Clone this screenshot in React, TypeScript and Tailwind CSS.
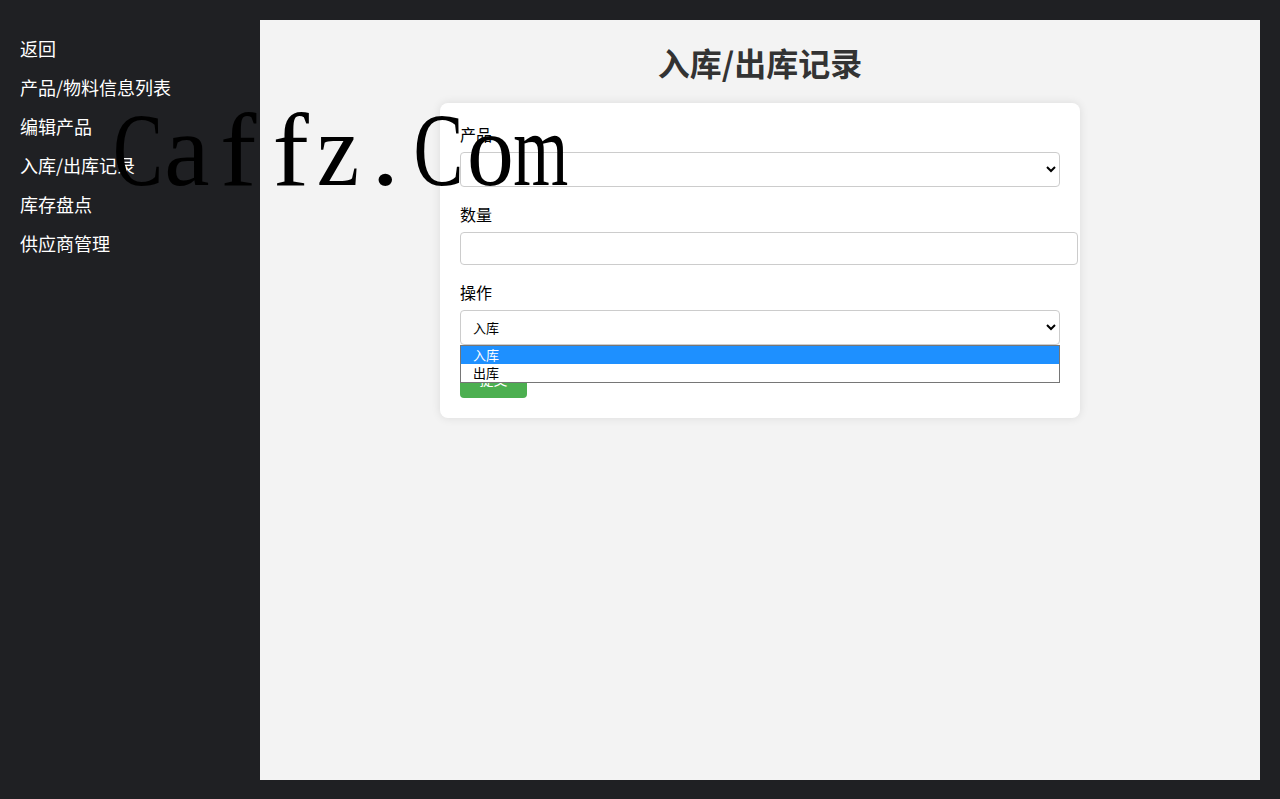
import React from 'react';

/* ─── Sidebar ───────────────────────────────────────────────── */

const navItems = ['返回', '产品/物料信息列表', '编辑产品', '入库/出库记录', '库存盘点', '供应商管理'];

const Sidebar: React.FC = () => (
    <aside className="w-[260px] shrink-0 pl-[20px] pt-[29px]">
        <ul className="flex flex-col">
            {navItems.map((item) => (
                <li key={item} className="h-[39px] leading-[39px] text-[18px] text-white">
                    <a href="#">{item}</a>
                </li>
            ))}
        </ul>
    </aside>
);

/* ─── Watermark ─────────────────────────────────────────────── */

const marks: { ch: string; cls: string }[] = [
    { ch: 'C', cls: 'w-[48px] scale-x-[0.72]' },
    { ch: 'a', cls: 'w-[50px] scale-x-[0.98]' },
    { ch: 'f', cls: 'w-[52.5px] scale-x-[1.05]' },
    { ch: 'f', cls: 'w-[51.5px] scale-x-[1.05]' },
    { ch: 'z', cls: 'w-[44px] scale-x-[0.92]' },
    { ch: '.', cls: 'w-[50.5px] scale-x-[1.1]' },
    { ch: 'C', cls: 'w-[55px] scale-x-[0.72]' },
    { ch: 'o', cls: 'w-[49px] scale-x-[0.9]' },
    { ch: 'm', cls: 'w-[51.5px] scale-x-[0.68]' },
];

const Watermark: React.FC = () => (
    <div className="absolute left-[114px] top-[98px] flex pointer-events-none text-black text-[104px] leading-none font-['Liberation_Serif',serif]">
        {marks.map((m, i) => (
            <span key={i} className={`flex justify-center shrink-0 ${m.cls}`}>
                {m.ch}
            </span>
        ))}
    </div>
);

/* ─── Form ──────────────────────────────────────────────────── */

const StockForm: React.FC = () => (
    <div className="w-[640px] mx-auto bg-white rounded-[8px] p-[20px] shadow-[0_0_10px_rgba(0,0,0,0.1)]">
        <label className="block text-[16px] leading-[22px] text-black mb-[7px]">产品</label>
        <select className="block w-[600px] h-[35px] px-[8px] border border-[#ccc] rounded-[4px] bg-white text-[13px] mb-[16px]">
            <option></option>
        </select>

        <label className="block text-[16px] leading-[22px] text-black mb-[7px]">数量</label>
        <input type="number" className="block w-[618px] h-[33px] px-[8px] border border-[#ccc] rounded-[4px] bg-white mb-[16px]" />

        <label className="block text-[16px] leading-[22px] text-black mb-[7px]">操作</label>
        <div className="relative mb-[16px]">
            <select className="block w-[600px] h-[35px] px-[8px] border border-[#ccc] rounded-[4px] bg-white text-[13px] text-black">
                <option>入库</option>
                <option>出库</option>
            </select>
            {/* open dropdown list */}
            <div className="absolute left-0 top-[35px] z-10 w-[600px] bg-white border border-[#767676] text-[13px] leading-[18px]">
                <div className="bg-[#1e90ff] text-white pl-[12px]">入库</div>
                <div className="text-black pl-[12px]">出库</div>
            </div>
        </div>

        <button className="h-[37px] w-[67px] bg-[#4caf50] text-white text-[14px] rounded-[4px]">提交</button>
    </div>
);

/* ─── App ───────────────────────────────────────────────────── */

export default function App() {
    return (
        <div className="relative flex h-[799px] bg-[#1f2023] overflow-hidden font-['Noto_Sans_CJK_SC','Noto_Sans',sans-serif]">
            <Sidebar />
            <main className="flex-1 mt-[20px] mr-[20px] h-[760px] bg-[#f3f3f3] p-[20px]">
                <h1 className="h-[44px] leading-[44px] mb-[19px] text-center text-[32px] font-bold text-[#333]">入库/出库记录</h1>
                <StockForm />
            </main>
            <Watermark />
        </div>
    );
}
